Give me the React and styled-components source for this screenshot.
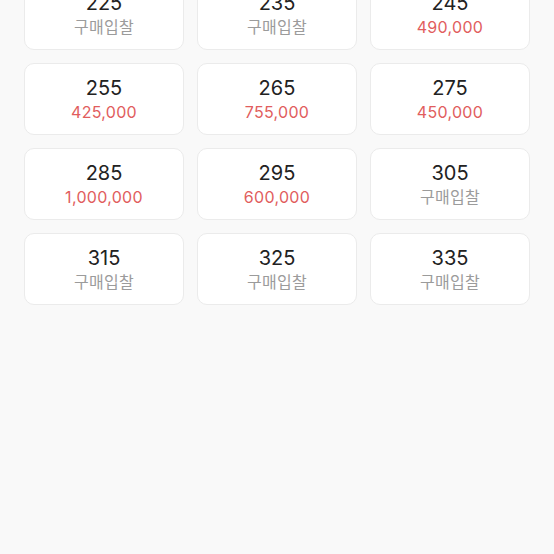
import React from 'react';
import styled, { createGlobalStyle } from 'styled-components';

const GlobalStyle = createGlobalStyle`
  html, body {
    margin: 0;
    padding: 0;
    background-color: #f9f9f9;
    font-family: Inter, "Noto Sans CJK KR", sans-serif;
  }
`;

const Page = styled.div`
  width: 554px;
  height: 554px;
  overflow: hidden;
  background-color: #f9f9f9;
`;

const Grid = styled.div`
  display: grid;
  grid-template-columns: repeat(3, 160px);
  column-gap: 13px;
  row-gap: 13px;
  padding: 0 24px;
  margin-top: -22px;
`;

const Card = styled.div`
  height: 72px;
  box-sizing: border-box;
  background-color: #fff;
  border: 1px solid #ebebeb;
  border-radius: 10px;
  display: flex;
  flex-direction: column;
  align-items: center;
  justify-content: center;
`;

const Size = styled.div`
  font-size: 20px;
  line-height: 25px;
  color: #222;
`;

const Price = styled.div`
  font-size: 16px;
  line-height: 22px;
  letter-spacing: 0.3px;
  color: ${(p) => (p.$bid ? '#9b9b9b' : '#e15d5d')};
`;

const items = [
  ['225', null], ['235', null], ['245', '490,000'],
  ['255', '425,000'], ['265', '755,000'], ['275', '450,000'],
  ['285', '1,000,000'], ['295', '600,000'], ['305', null],
  ['315', null], ['325', null], ['335', null],
];

export default function App() {
  return (
    <Page>
      <GlobalStyle />
      <Grid>
        {items.map(([size, price]) => (
          <Card key={size}>
            <Size>{size}</Size>
            <Price $bid={!price}>{price || '구매입찰'}</Price>
          </Card>
        ))}
      </Grid>
    </Page>
  );
}
